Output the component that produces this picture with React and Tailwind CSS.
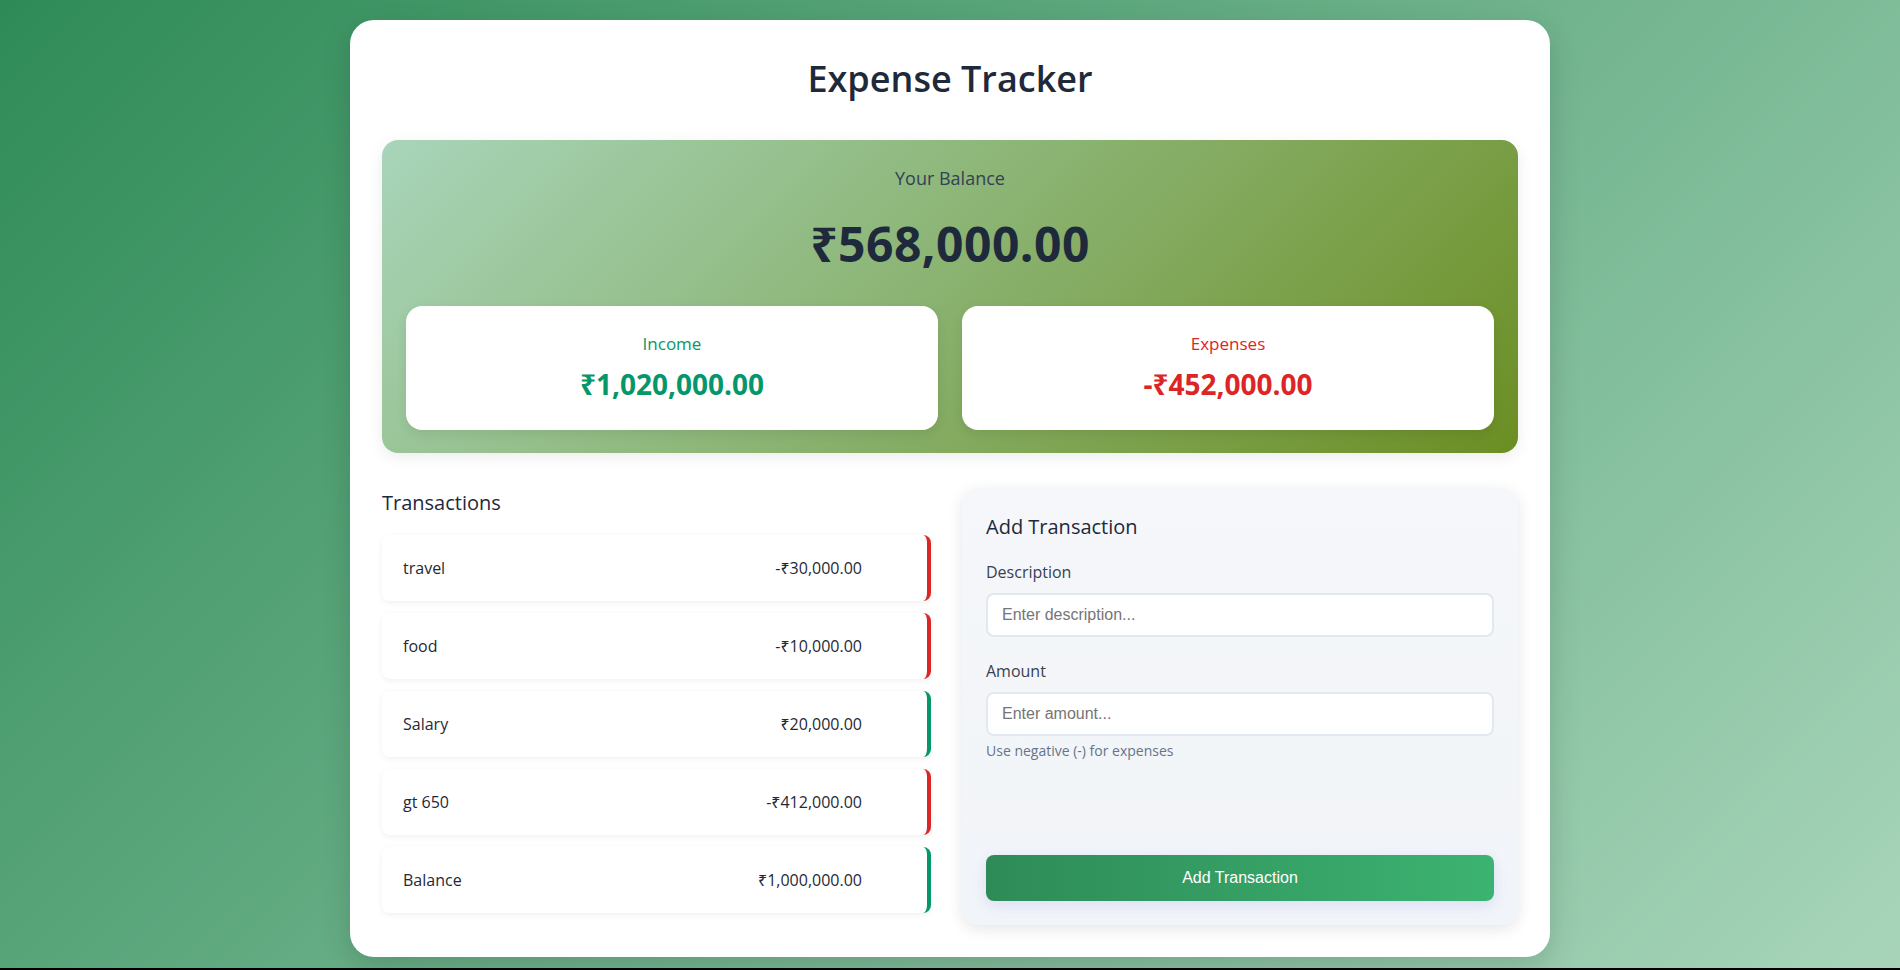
import { useState } from 'react';

const initialTransactions = [
  { id: 1, text: 'travel', amount: -30000 },
  { id: 2, text: 'food', amount: -10000 },
  { id: 3, text: 'Salary', amount: 20000 },
  { id: 4, text: 'gt 650', amount: -412000 },
  { id: 5, text: 'Balance', amount: 1000000 },
];

const fmt = (n) =>
  '₹' + Math.abs(n).toLocaleString('en-US', { minimumFractionDigits: 2, maximumFractionDigits: 2 });

const sans = "font-['Open_Sans','Noto_Sans',sans-serif]";

export default function App() {
  const [transactions] = useState(initialTransactions);
  const [text, setText] = useState('');
  const [amount, setAmount] = useState('');

  const income = transactions.filter((t) => t.amount > 0).reduce((a, t) => a + t.amount, 0);
  const expense = transactions.filter((t) => t.amount < 0).reduce((a, t) => a + t.amount, 0);
  const balance = income + expense;

  return (
    <div className="min-h-screen bg-black">
      <div className={`h-[968px] pt-5 bg-[linear-gradient(135deg,#2e8b57,#a8d5ba)] ${sans}`}>
        <div className="mx-auto w-[1200px] rounded-3xl bg-white p-8 shadow-[0_10px_30px_rgba(0,0,0,0.15)]">
          <h1 className="mb-[34px] text-center text-4xl leading-[54px] font-semibold text-[#1e293b]">
            Expense Tracker
          </h1>

          {/* balance */}
          <div className="rounded-2xl bg-[linear-gradient(135deg,#a8d5ba,#6b8e23)] px-6 pt-[25px] pb-[23px] text-center shadow-[0_4px_15px_rgba(0,0,0,0.08)]">
            <h2 className="text-lg leading-[27px] font-normal text-[#334155]">Your Balance</h2>
            <p className="mt-4 text-5xl leading-[72px] font-bold tracking-[0.01em] text-[#1e293b]">{fmt(balance)}</p>

            <div className="mt-[26px] flex gap-6">
              <div className="flex-1 rounded-2xl bg-white p-6 shadow-[0_4px_12px_rgba(0,0,0,0.08)]">
                <h4 className="mb-[6px] text-[17px] leading-[27px] text-[#059669]">Income</h4>
                <p className="text-[28px] leading-[43px] font-bold text-[#059669]">{fmt(income)}</p>
              </div>
              <div className="flex-1 rounded-2xl bg-white p-6 shadow-[0_4px_12px_rgba(0,0,0,0.08)]">
                <h4 className="mb-[6px] text-[17px] leading-[27px] text-[#dc2626]">Expenses</h4>
                <p className="text-[28px] leading-[43px] font-bold text-[#dc2626]">-{fmt(expense)}</p>
              </div>
            </div>
          </div>

          <div className="mt-[35px] flex gap-[31px]">
            {/* list */}
            <div className="w-[549px]">
              <h3 className="mb-[17px] text-xl leading-[30px] font-medium text-[#1e293b]">Transactions</h3>
              <ul>
                {transactions.map((t) => (
                  <li
                    key={t.id}
                    className={`mb-3 flex h-[66px] items-center rounded-lg border-r-4 bg-white pl-[21px] pr-5 text-base text-[#1f2937] shadow-[0_2px_6px_rgba(0,0,0,0.06)] ${
                      t.amount < 0 ? 'border-[#dc2626]' : 'border-[#059669]'
                    }`}
                  >
                    <span className="flex-1">{t.text}</span>
                    <span>{t.amount < 0 ? '-' : ''}{fmt(t.amount)}</span>
                    <button className="ml-[15px] w-[30px] opacity-0" aria-label="delete">x</button>
                  </li>
                ))}
              </ul>
            </div>

            {/* form */}
            <div className="flex flex-1 flex-col rounded-2xl bg-gradient-to-b from-[#f5f7fa] to-[#f1f4f8] p-6 shadow-[0_4px_15px_rgba(0,0,0,0.1)]">
              <h3 className="mb-[18px] text-xl leading-[30px] font-medium text-[#1e293b]">Add Transaction</h3>
              <label className="mb-[9px] block text-base leading-6 font-medium text-[#374151]">Description</label>
              <input
                type="text"
                value={text}
                onChange={(e) => setText(e.target.value)}
                placeholder="Enter description..."
                className="h-[44px] w-full rounded-lg border-2 border-[#e2e8f0] bg-white px-[14px] font-['Liberation_Sans',Arial,sans-serif] text-base text-[#1f2937] outline-none placeholder:text-[#757575]"
              />
              <label className="mt-[22px] mb-[9px] block text-base leading-6 font-medium text-[#374151]">Amount</label>
              <input
                type="number"
                value={amount}
                onChange={(e) => setAmount(e.target.value)}
                placeholder="Enter amount..."
                className="h-[44px] w-full rounded-lg border-2 border-[#e2e8f0] bg-white px-[14px] font-['Liberation_Sans',Arial,sans-serif] text-base text-[#1f2937] outline-none placeholder:text-[#757575]"
              />
              <small className="mt-1 block text-sm leading-[21px] text-[#64748b]">Use negative (-) for expenses</small>
              <button className="mt-auto h-[46px] w-full rounded-lg bg-gradient-to-r from-[#2e8b57] to-[#3cb371] font-['Liberation_Sans',Arial,sans-serif] text-base text-white shadow-[0_4px_14px_rgba(99,102,241,0.15)]">
                Add Transaction
              </button>
            </div>
          </div>
        </div>
      </div>
    </div>
  );
}
